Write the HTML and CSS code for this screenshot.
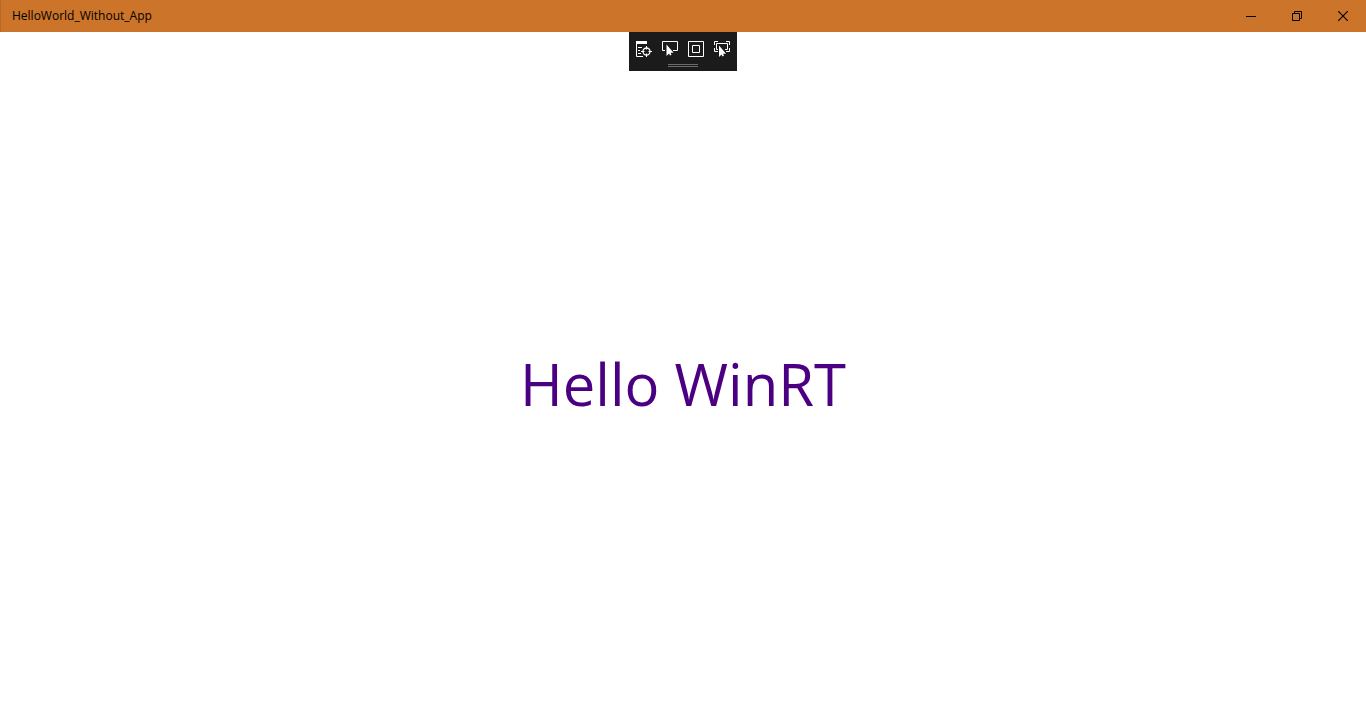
FILE: index.html
```html
<!DOCTYPE html>
<html lang="en">
<head>
<meta charset="utf-8">
<title>HelloWorld_Without_App</title>
<link rel="stylesheet" href="styles.css">
</head>
<body>
<div class="window">
  <header class="titlebar">
    <span class="titlebar-text">HelloWorld_Without_App</span>
    <div class="caption-buttons">
      <button class="caption-button" type="button" aria-label="Minimize">
        <svg width="10" height="10" viewBox="0 0 10 10"><path d="M0 5.5h10" /></svg>
      </button>
      <button class="caption-button" type="button" aria-label="Restore">
        <svg width="10" height="10" viewBox="0 0 10 10"><path d="M.5 2.5h7v7h-7zM2.5 2V.5h7v7H8" /></svg>
      </button>
      <button class="caption-button" type="button" aria-label="Close">
        <svg width="10" height="10" viewBox="0 0 10 10"><path class="cross" d="M0 0l10 10M10 0L0 10" /></svg>
      </button>
    </div>
  </header>
  <main class="page">
    <div class="debug-bar" role="toolbar" aria-label="Debug tools">
      <div class="debug-tools">
        <button class="debug-button" type="button" aria-label="Go to live visual tree">
          <svg width="16" height="16" viewBox="0 0 16 16">
            <path class="solid" d="M0 0h11v3H0z" />
            <path d="M.5 2v13.5H7M2 6.500h4M2 9.500h2M2 12.500h3" />
            <circle class="ring" cx="10.500" cy="10.500" r="3.500" />
            <path d="M10.500 5v3.500M10.500 12.500V16M5 10.500h3.500M12.500 10.500H16" />
          </svg>
        </button>
        <button class="debug-button" type="button" aria-label="Enable selection">
          <svg width="16" height="16" viewBox="0 0 16 16">
            <path d="M3 9.500H.5v-9h15v9H11" />
            <path class="pointer" d="M4.500 3.500v11.500l2.500-2.500 1 2 1.500-.7-.9-2h3z" />
          </svg>
        </button>
        <button class="debug-button" type="button" aria-label="Display layout adorners">
          <svg width="16" height="16" viewBox="0 0 16 16"><path d="M.5.5h15v15H.5zM4.500 4.500h7v7h-7z" /></svg>
        </button>
        <button class="debug-button" type="button" aria-label="Track focused element">
          <svg width="16" height="16" viewBox="0 0 16 16">
            <path d="M.5 4V.5H4M12 .5h3.500V4M.5 7v3.500H4M12 10.500h3.500V7M4 8.500H2.500v-6h11v6H11" />
            <path class="pointer" d="M5 4.500v11.500l2.500-2.500 1 2 1.500-.7-.9-2h3z" />
          </svg>
        </button>
      </div>
      <div class="grip"></div>
    </div>
    <h1 class="greeting">Hello WinRT</h1>
  </main>
</div>
</body>
</html>
```
FILE: styles.css
```css
* {
  box-sizing: border-box;
}

body {
  margin: 0;
  background: #fff;
  font-family: "Open Sans", "Noto Sans", sans-serif;
}

.window {
  display: flex;
  flex-direction: column;
  min-height: 100vh;
}

.titlebar {
  display: flex;
  align-items: center;
  justify-content: space-between;
  height: 32px;
  padding-left: 11px;
  border-left: 1px solid #b76925;
  background: #cc7429;
  color: #000;
}

.titlebar-text {
  font-size: 12px;
  line-height: 16px;
}

.caption-buttons,
.debug-tools {
  display: flex;
}

.caption-button,
.debug-button {
  display: flex;
  align-items: center;
  justify-content: center;
  padding: 0;
  border: 0;
  background: transparent;
}

.caption-button {
  width: 46px;
  height: 32px;
  color: #000;
}

svg path,
svg circle {
  fill: none;
  stroke: currentColor;
}

svg .solid {
  fill: currentColor;
  stroke: none;
}

svg .cross {
  stroke-width: 1.2;
}

svg .ring {
  stroke-width: 1.3;
}

svg .pointer {
  fill: currentColor;
  stroke: #1b1b1b;
  stroke-width: 1.5;
  paint-order: stroke;
}

.page {
  position: relative;
  display: flex;
  flex: 1;
  align-items: center;
  justify-content: center;
  padding-top: 8px;
}

/* Floats over the top edge of the page content */
.debug-bar {
  position: absolute;
  top: 0;
  left: 50%;
  transform: translateX(-50%);
  padding: 4px 2px;
  background: #1b1b1b;
  color: #fff;
}

.debug-button {
  width: 26px;
  height: 26px;
  color: #fff;
}

.grip {
  width: 30px;
  height: 3px;
  margin: 2px auto 0;
  border-top: 1px solid #6b6b6b;
  border-bottom: 1px solid #6b6b6b;
}

.greeting {
  margin: 0;
  color: #4b0082;
  font-size: 58px;
  font-weight: 400;
  line-height: 80px;
}
```
